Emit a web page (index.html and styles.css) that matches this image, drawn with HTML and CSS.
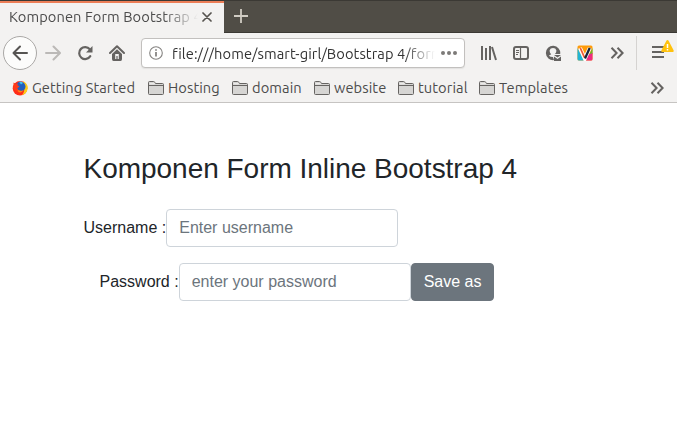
FILE: index.html
```html
<!DOCTYPE html>
<html lang="id">
<head>
<meta charset="utf-8">
<title>Komponen Form Bootstrap 4</title>
<link rel="stylesheet" href="styles.css">
</head>
<body>
<svg width="0" height="0" class="defs">
  <symbol id="folder" viewBox="0 0 16 14">
    <path d="M.5 12.5v-11q0-1 1-1h4q1 0 1.4 1l.6 1h7q1 0 1 1v9q0 1-1 1h-13q-1 0-1-1z" fill="#d6d5d3" stroke="#666462"/>
    <path d="M1 4.5h14" stroke="#666462"/><path d="M1.5 2.8h5.2" stroke="#f3f2f1"/>
  </symbol>
  <symbol id="more" viewBox="0 0 16 16">
    <path d="M2.5 2.8 7.6 8l-5.1 5.2M8.5 2.8 13.6 8l-5.1 5.2" fill="none" stroke="#656361" stroke-width="2"/>
  </symbol>
</svg>
<header class="browser">
  <div class="tabs">
    <div class="tab">
      <span class="tab-title">Komponen Form Bootstrap 4</span>
      <svg class="close" viewBox="0 0 10 10"><path d="m1 1 8 8m0-8-8 8" stroke="#56534f" stroke-width="1.7" stroke-linecap="round"/></svg>
    </div>
    <svg class="plus" viewBox="0 0 14 14"><path d="M7 0v14M0 7h14" stroke="#d0ccc3" stroke-width="1.8"/></svg>
  </div>
  <nav class="toolbar">
    <span class="back"><svg class="icon" viewBox="0 0 16 16"><path d="M15 8H1.5M8 1.5 1.5 8 8 14.5" fill="none" stroke="#565452" stroke-width="2" stroke-linecap="round" stroke-linejoin="round"/></svg></span>
    <svg class="icon forward" viewBox="0 0 16 16"><path d="M1 8h13.5M8.5 1.5 15 8l-6.500 6.500" fill="none" stroke="#bbb9b7" stroke-width="2" stroke-linecap="round" stroke-linejoin="round"/></svg>
    <svg class="icon" viewBox="0 0 16 16"><path d="M13.300 11.200A6 6 0 1 1 12.800 4.200" fill="none" stroke="#656361" stroke-width="2.200" stroke-linecap="round"/><path d="M15.500 1v6.500H9z" fill="#656361"/></svg>
    <svg class="icon" viewBox="0 0 16 16"><path d="M1 8 8 1.300 15 8" fill="none" stroke="#656361" stroke-width="2" stroke-linecap="round" stroke-linejoin="round"/><path fill="#656361" fill-rule="evenodd" d="M8 4.300 13 9v5q0 2-1.500 2h-7Q3 16 3 14V9zM6.200 9v5h1.200v-3h1.200v3h1.200V9z"/></svg>
    <div class="url">
      <svg class="info" viewBox="0 0 14 14"><circle cx="7" cy="7" r="6.300" fill="none" stroke="#858381" stroke-width="1.100"/><path d="M7 6v4.600M7 3.200v1.600" stroke="#777573" stroke-width="1.600"/></svg>
      <span class="address">file:///home/smart-girl/Bootstrap 4/form</span>
      <svg class="dots" viewBox="0 0 16 4"><g fill="#7c7a78"><circle cx="2" cy="2" r="2"/><circle cx="8" cy="2" r="2"/><circle cx="14" cy="2" r="2"/></g></svg>
    </div>
    <svg class="icon" viewBox="0 0 16 16"><path d="M1 1v14M5 3v12M9 1v14M11 2l4 13" stroke="#656361" stroke-width="2"/></svg>
    <svg class="icon" viewBox="0 0 16 16"><rect x="1" y="2" width="14" height="12" rx="2" fill="none" stroke="#656361" stroke-width="2"/><path d="M7.500 2v12" stroke="#656361" stroke-width="1.200"/><path d="M3 5.500h3M3 7.500h3M3 9.500h2" stroke="#656361"/></svg>
    <svg class="icon" viewBox="0 0 16 16"><path d="M9 15.100A7.200 7.200 0 1 1 15.200 9H10q1.700-1.600 1.300-3.800Q10.800 3 8 3T4.700 5.200Q4.300 7.500 6.200 9.300 5 10.200 3.800 10.700q2 1.500 4.200 1.300z" fill="#656361"/><path d="M9 10h7l-3.500 2.500zM9 11.400l3.500 2.600 3.500-2.600V16H9z" fill="#656361"/></svg>
    <svg class="icon" viewBox="0 0 16 16"><rect x=".5" y=".5" width="15" height="15" rx="1.500" fill="#ff9b0a"/><path d="M.5 3 7 15.500H2q-1.500 0-1.500-1.500z" fill="#20b5d6"/><path d="M15.500 3v6L12 10z" fill="#65b82e"/><path d="M11 10l4.500-2v6q0 1.500-1.500 1.500H9z" fill="#ed2b82"/><path d="m3 3 4.800 10.500L12.800 3" fill="none" stroke="#fff" stroke-width="4"/><path d="m3.300 3 4.200 9.500" stroke="#f15b32" stroke-width="1.800"/><path d="m8 13.500 4.700-10.500" stroke="#17243d" stroke-width="2.300"/></svg>
    <svg class="icon"><use href="#more"/></svg>
    <span class="separator"></span>
    <svg class="menu" viewBox="0 0 25 18"><path d="M2 7h12M2 12h12M2 17h12" stroke="#656361" stroke-width="2"/><path d="M17.500 0q.7 0 1.100.8l5 9.500q.7 1.700-.8 1.700H12.200q-1.500 0-.8-1.700l5-9.500q.4-.8 1.100-.8z" fill="#ffc20e"/><path d="M17.500 4v4M17.500 9v1.500" stroke="#fff" stroke-width="1.500"/></svg>
  </nav>
  <div class="bookmarks">
    <div class="bookmark w-start"><svg class="fox" viewBox="0 0 16 16"><circle cx="8" cy="8.300" r="7.300" fill="#ff2c18"/><path d="M11 1q5 3 4.800 7-.8 6-6 7.200Q13 12 12 8 12.500 5 11 1z" fill="#ffcb16"/><circle cx="8.600" cy="6.600" r="4.900" fill="#2360bd"/><path d="M7 1.800q3-1 4 1.200l-2 1.500z" fill="#43c5ef"/><path d="M1.500 2.500 3.800 4 6 3.600 5.500 5.200l2 1.300-2.200 1.800Q6 11 9.300 10.500l-3 2L1.500 9z" fill="#ff3b18"/><path d="M5.500 9.500q2 2.500 6 .5-2 3.500-5 2z" fill="#ff8b12"/></svg><span>Getting Started</span></div>
    <div class="bookmark w-host"><svg class="folder"><use href="#folder"/></svg><span>Hosting</span></div>
    <div class="bookmark w-domain"><svg class="folder"><use href="#folder"/></svg><span>domain</span></div>
    <div class="bookmark w-web"><svg class="folder"><use href="#folder"/></svg><span>website</span></div>
    <div class="bookmark w-tut"><svg class="folder"><use href="#folder"/></svg><span>tutorial</span></div>
    <div class="bookmark w-temp"><svg class="folder"><use href="#folder"/></svg><span>Templates</span></div>
    <svg class="icon overflow"><use href="#more"/></svg>
  </div>
</header>
<main class="container">
  <h3>Komponen Form Inline Bootstrap 4</h3>
  <form>
    <div class="form-group"><label for="user">Username :</label><input id="user" type="text" placeholder="Enter username"></div>
    <div class="form-group password"><label for="pass">Password :</label><input id="pass" type="password" placeholder="enter your password"><button type="button">Save as</button></div>
  </form>
</main>
</body>
</html>
```
FILE: styles.css
```css
* { box-sizing: border-box; }
body { margin: 0; background: #fff; color: #212529; font: 16px/24px "Liberation Sans", Arial, sans-serif; overflow: hidden; }
svg { display: block; flex: none; }
.defs { position: absolute; }
.browser { height: 103px; background: #f3f2f1; border-bottom: 1px solid #c6c4c2; font-family: Ubuntu, "Noto Sans", sans-serif; font-size: 14.667px; letter-spacing: .08px; color: #4c4c4c; }
.tabs { height: 33px; display: flex; background: #504d46; border-top: 1px solid #3b3934; border-bottom: 1px solid #3b3934; }
.tab { width: 224px; height: 32px; padding: 0 12px 0 9px; display: flex; align-items: center; justify-content: space-between; background: #f3f2f1; border-top: 2px solid #ec7e57; flex: none; }
.tab-title { width: 189px; margin-top: -2px; overflow: hidden; white-space: nowrap; line-height: 26px; mask-image: linear-gradient(to right, #000 155px, transparent 189px); }
.close { width: 10px; height: 10px; margin-top: -2px; }
.plus { width: 14px; height: 14px; margin: 8px 0 0 10px; }
.toolbar { height: 40px; display: flex; align-items: center; gap: 16px; padding-left: 3px; }
.icon { width: 16px; height: 16px; }
.back { width: 34px; height: 34px; border: 1px solid #aaa8a6; border-radius: 50%; background: #fcfcfb; display: flex; align-items: center; justify-content: center; flex: none; }
.forward { margin-left: -8px; }
.url { width: 324px; height: 30px; flex: none; display: flex; align-items: center; padding: 0 7px; border: 1px solid #c2c0be; border-radius: 4px; background: #fff; box-shadow: 0 1px 1px #e3e2e0; }
.info { width: 14px; height: 14px; }
.address { width: 263px; margin-left: 9px; padding-top: 1px; overflow: hidden; white-space: nowrap; color: #333; mask-image: linear-gradient(to right, #000 232px, transparent 263px); }
.dots { width: 16px; height: 4px; margin-left: 6px; }
.separator { width: 1px; height: 34px; margin-left: -5px; background: #d5d3d1; flex: none; }
.menu { width: 25px; height: 18px; margin: -9px 0 0 -3px; }
.bookmarks { height: 29px; padding-left: 12px; display: flex; align-items: center; white-space: nowrap; }
.bookmark { display: flex; align-items: center; gap: 4px; flex: none; }
.fox { width: 16px; height: 16px; }
.folder { width: 16px; height: 14px; }
.w-start { width: 136px; }
.w-host { width: 84px; }
.w-domain { width: 82px; }
.w-web { width: 84px; }
.w-tut { width: 81px; }
.overflow { margin-left: auto; margin-right: 12px; }
.container { padding: 48px 83.5px 0; }
h3 { margin: 0 0 23px; padding-top: 1px; font-size: 28px; line-height: 34px; font-weight: 400; letter-spacing: -.02px; }
.form-group { display: flex; align-items: center; margin-bottom: 16px; }
.password { margin-left: 16px; }
label { white-space: nowrap; }
input { width: 232px; height: 38px; padding: 6px 12px; border: 1px solid #ced4da; border-radius: 4px; font: inherit; background: #fff; flex: none; }
input::placeholder { color: #6c757d; opacity: 1; }
button { width: 83px; height: 38px; padding: 6px 12px; border: 1px solid #6c757d; border-radius: 4px; background: #6c757d; color: #fff; font: inherit; white-space: nowrap; }
```
